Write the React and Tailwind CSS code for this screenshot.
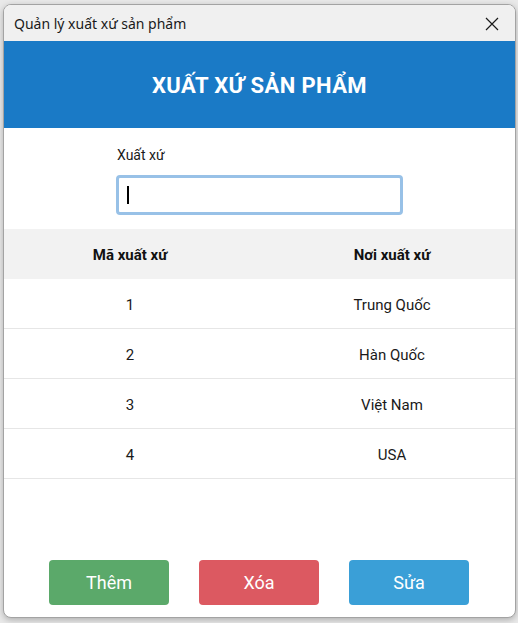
import React from "react";

const rows = [
  ["1", "Trung Quốc"],
  ["2", "Hàn Quốc"],
  ["3", "Việt Nam"],
  ["4", "USA"],
];

export default function App() {
  return (
    <div className="w-[518px] h-[623px] bg-[#e9e9e9] overflow-hidden flex flex-col pl-[3px] pt-[4px]">
      <div className="w-[513px] h-[614px] flex flex-col bg-white border border-[#a3a3a3] rounded-[8px] overflow-hidden shadow-[0_2px_6px_rgba(0,0,0,0.25)]">
        {/* title bar */}
        <div className="h-[36px] shrink-0 bg-[#f0f0f0] flex items-center justify-between pl-[10px] pr-[16px]">
          <span className="text-[14px] text-[#1a1a1a]" style={{ fontFamily: "'Noto Sans', 'Open Sans', sans-serif" }}>
            Quản lý xuất xứ sản phẩm
          </span>
          <svg width="14" height="14" viewBox="0 0 14 14" className="mt-[1px]">
            <path d="M1 1 L13 13 M13 1 L1 13" stroke="#1a1a1a" strokeWidth="1.2" fill="none" />
          </svg>
        </div>
        <div className="flex-1 flex flex-col" style={{ fontFamily: "Roboto, 'Noto Sans', sans-serif" }}>
          {/* blue header */}
          <div className="h-[87px] shrink-0 bg-[#1a7ac6] flex items-center justify-center">
            <span className="text-white font-bold text-[22px] tracking-[0.4px] mt-[1px]">XUẤT XỨ SẢN PHẨM</span>
          </div>
          {/* form */}
          <div className="h-[101px] shrink-0 flex flex-col pl-[112px] pt-[18px]">
            <span className="text-[14px] text-[#1a1a1a] leading-[18px] pl-[1px]">Xuất xứ</span>
            <div className="mt-[11px] w-[287px] h-[40px] border-[3px] border-[#98c1e7] rounded-[4px] flex items-center pl-[8px]">
              <div className="w-[2px] h-[18px] bg-black" />
            </div>
          </div>
          {/* table header */}
          <div className="h-[50px] shrink-0 bg-[#f2f2f2] flex items-center pt-[2px]">
            <div className="w-[252px] shrink-0 text-center font-bold text-[15px] text-[#111]">Mã xuất xứ</div>
            <div className="w-[272px] shrink-0 text-center font-bold text-[15px] text-[#111]">Nơi xuất xứ</div>
          </div>
          {rows.map(([id, name]) => (
            <div key={id} className="h-[50px] shrink-0 flex items-center border-b border-[#e6e6e6] text-[15px] text-[#1a1a1a] pt-[4px]">
              <div className="w-[252px] shrink-0 text-center">{id}</div>
              <div className="w-[272px] shrink-0 text-center">{name}</div>
            </div>
          ))}
          <div className="flex-1" />
          {/* buttons */}
          <div className="flex gap-[30px] pl-[45px] pb-[12px]">
            <button className="w-[120px] h-[45px] rounded-[4px] bg-[#5ba96a] text-white text-[18px]">Thêm</button>
            <button className="w-[120px] h-[45px] rounded-[4px] bg-[#dc5961] text-white text-[18px]">Xóa</button>
            <button className="w-[120px] h-[45px] rounded-[4px] bg-[#3a9fd7] text-white text-[18px]">Sửa</button>
          </div>
        </div>
      </div>
    </div>
  );
}
